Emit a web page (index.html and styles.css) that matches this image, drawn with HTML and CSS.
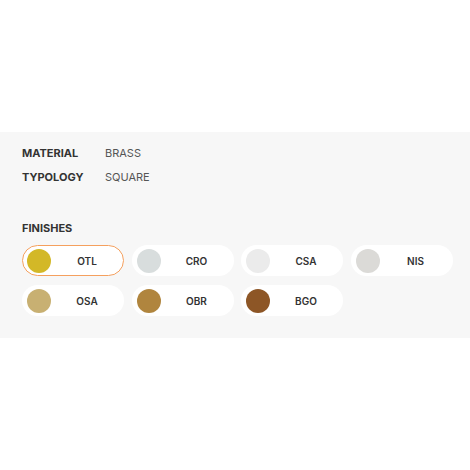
FILE: index.html
```html
<!DOCTYPE html>
<html>
<head>
<meta charset="utf-8">
<link rel="stylesheet" href="styles.css">
</head>
<body>
<div class="top"></div>
<section class="panel">
  <dl class="specs">
    <div class="spec"><dt>MATERIAL</dt><dd>BRASS</dd></div>
    <div class="spec"><dt>TYPOLOGY</dt><dd>SQUARE</dd></div>
  </dl>
  <h3 class="finishes-title">FINISHES</h3>
  <div class="finishes">
    <button class="pill active"><span class="dot otl"></span><span class="code">OTL</span></button>
    <button class="pill"><span class="dot cro"></span><span class="code">CRO</span></button>
    <button class="pill"><span class="dot csa"></span><span class="code">CSA</span></button>
    <button class="pill"><span class="dot nis"></span><span class="code">NIS</span></button>
    <button class="pill"><span class="dot osa"></span><span class="code">OSA</span></button>
    <button class="pill"><span class="dot obr"></span><span class="code">OBR</span></button>
    <button class="pill"><span class="dot bgo"></span><span class="code">BGO</span></button>
  </div>
</section>
</body>
</html>
```
FILE: styles.css
```css
* { box-sizing: border-box; }
html, body { margin: 0; padding: 0; background: #fff; }
body { font-family: Inter, "Liberation Sans", sans-serif; width: 470px; height: 470px; }
.top { height: 132px; }
.panel {
  background: #f7f7f7;
  height: 206px;
  padding: 14px 17px 0 22px;
}
.specs { margin: 0; display: flex; flex-direction: column; gap: 10px; }
.spec { display: flex; align-items: center; height: 14px; }
.spec dt { width: 83px; font-size: 11px; font-weight: 700; color: #333; }
.spec dd { margin: 0; font-size: 11px; color: #555; }
.finishes-title {
  margin: 37px 0 0;
  font-size: 11px; font-weight: 700; color: #333;
  height: 14px; line-height: 14px;
}
.finishes {
  margin-top: 10px;
  display: grid;
  grid-template-columns: repeat(4, 102px);
  column-gap: 7.5px;
  row-gap: 9px;
}
.pill {
  height: 31px;
  border: 1.5px solid transparent;
  background: #fff;
  border-radius: 16px;
  display: flex; align-items: center;
  padding: 0 0 0 4px;
  font-family: inherit;
  cursor: pointer;
}
.pill.active { border-color: #f5a05e; }
.dot { width: 24px; height: 24px; border-radius: 50%; flex: none; }
.code { flex: 1; text-align: center; font-size: 10px; font-weight: 600; color: #333; }
.otl { background: #d3b827; }
.cro { background: #d8dddd; }
.csa { background: #ebebeb; }
.nis { background: #dbdad7; }
.osa { background: #c8b072; }
.obr { background: #b0853e; }
.bgo { background: #8d5626; }
```
